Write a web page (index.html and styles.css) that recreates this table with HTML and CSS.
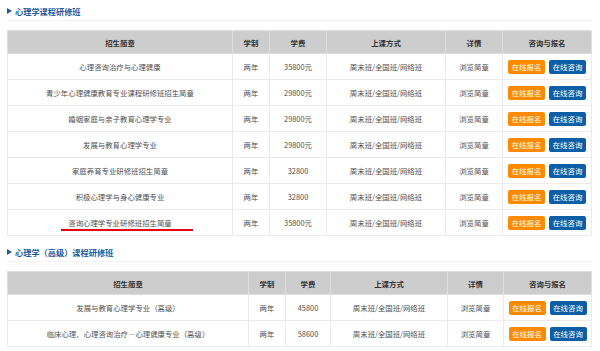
FILE: index.html
```html
<!DOCTYPE html>
<html lang="zh-CN">
<head>
    <meta charset="UTF-8">
    <title>心理学课程研修班</title>
    <link rel="stylesheet" href="styles.css">
</head>
<body>
    <div class="sec-title"><span class="arrow"></span>心理学课程研修班</div>
    <table class="course-table">
        <colgroup>
            <col style="width:225px"><col style="width:37px"><col style="width:57px">
            <col style="width:119px"><col style="width:57px"><col>
        </colgroup>
        <tr class="head">
            <th>招生简章</th><th>学制</th><th>学费</th><th>上课方式</th><th>详情</th><th>咨询与报名</th>
        </tr>
        <tr>
            <td>心理咨询治疗与心理健康</td><td>两年</td><td>35800元</td><td>周末班/全国班/网络班</td><td>浏览简章</td>
            <td><a class="btn apply">在线报名</a><a class="btn ask">在线咨询</a></td>
        </tr>
        <tr>
            <td>青少年心理健康教育专业课程研修班招生简章</td><td>两年</td><td>29800元</td><td>周末班/全国班/网络班</td><td>浏览简章</td>
            <td><a class="btn apply">在线报名</a><a class="btn ask">在线咨询</a></td>
        </tr>
        <tr>
            <td>婚姻家庭与亲子教育心理学专业</td><td>两年</td><td>29800元</td><td>周末班/全国班/网络班</td><td>浏览简章</td>
            <td><a class="btn apply">在线报名</a><a class="btn ask">在线咨询</a></td>
        </tr>
        <tr>
            <td>发展与教育心理学专业</td><td>两年</td><td>29800元</td><td>周末班/全国班/网络班</td><td>浏览简章</td>
            <td><a class="btn apply">在线报名</a><a class="btn ask">在线咨询</a></td>
        </tr>
        <tr>
            <td>家庭养育专业研修班招生简章</td><td>两年</td><td>32800</td><td>周末班/全国班/网络班</td><td>浏览简章</td>
            <td><a class="btn apply">在线报名</a><a class="btn ask">在线咨询</a></td>
        </tr>
        <tr>
            <td>积极心理学与身心健康专业</td><td>两年</td><td>32800</td><td>周末班/全国班/网络班</td><td>浏览简章</td>
            <td><a class="btn apply">在线报名</a><a class="btn ask">在线咨询</a></td>
        </tr>
        <tr>
            <td><span class="marked">咨询心理学专业研修班招生简章</span></td><td>两年</td><td>35800元</td><td>周末班/全国班/网络班</td><td>浏览简章</td>
            <td><a class="btn apply">在线报名</a><a class="btn ask">在线咨询</a></td>
        </tr>
    </table>

    <div class="sec-title second"><span class="arrow"></span>心理学（高级）课程研修班</div>
    <table class="course-table">
        <colgroup>
            <col style="width:241px"><col style="width:37px"><col style="width:45px">
            <col style="width:117px"><col style="width:56px"><col>
        </colgroup>
        <tr class="head">
            <th>招生简章</th><th>学制</th><th>学费</th><th>上课方式</th><th>详情</th><th>咨询与报名</th>
        </tr>
        <tr>
            <td>发展与教育心理学专业（高级）</td><td>两年</td><td>45800</td><td>周末班/全国班/网络班</td><td>浏览简章</td>
            <td><a class="btn apply">在线报名</a><a class="btn ask">在线咨询</a></td>
        </tr>
        <tr>
            <td>临床心理、心理咨询治疗—心理健康专业（高级）</td><td>两年</td><td>58600</td><td>周末班/全国班/网络班</td><td>浏览简章</td>
            <td><a class="btn apply">在线报名</a><a class="btn ask">在线咨询</a></td>
        </tr>
    </table>
</body>
</html>
```

FILE: styles.css
```css
body {
    margin: 0;
    padding: 0 8px 0 7px;
    font-family: "Noto Sans CJK SC", "Liberation Sans", sans-serif;
    color: #505050;
    background-color: #ffffff;
}

.sec-title {
    display: flex;
    align-items: center;
    height: 19px;
    padding-top: 1px;
    margin-bottom: 9px;
    border-bottom: 1px solid #f2f2f2;
    font-size: 8.2px;
    font-weight: 700;
    color: #1d5d9f;
}

.sec-title.second {
    margin-top: 5px;
}

.arrow {
    width: 0;
    height: 0;
    margin-right: 3px;
    border-top: 3px solid transparent;
    border-bottom: 3px solid transparent;
    border-left: 5px solid #1d5d9f;
}

.course-table {
    width: 585px;
    table-layout: fixed;
    border-collapse: collapse;
    border: 1px solid #ebebeb;
    font-size: 7.4px;
    text-align: center;
}

.course-table th {
    height: 22px;
    padding: 0;
    background-color: #cdcdcd;
    border: 1px solid #dedede;
    color: #333333;
    font-weight: 700;
}

.course-table td {
    height: 25px;
    padding: 0;
    border: 1px solid #ebebeb;
    white-space: nowrap;
}

.btn {
    display: inline-block;
    width: 37px;
    height: 14px;
    line-height: 14px;
    border-radius: 2px;
    color: #ffffff;
    font-size: 7.4px;
    vertical-align: middle;
}

.btn + .btn {
    margin-left: 4px;
}

.btn.apply {
    background-color: #ff8a00;
}

.btn.ask {
    background-color: #0c5ea6;
}

/* hand-drawn red underline, runs longer on the right */
.marked {
    position: relative;
}

.marked::after {
    content: "";
    position: absolute;
    left: -7px;
    right: -21px;
    bottom: -3px;
    height: 2px;
    background-color: #e60012;
}
```
